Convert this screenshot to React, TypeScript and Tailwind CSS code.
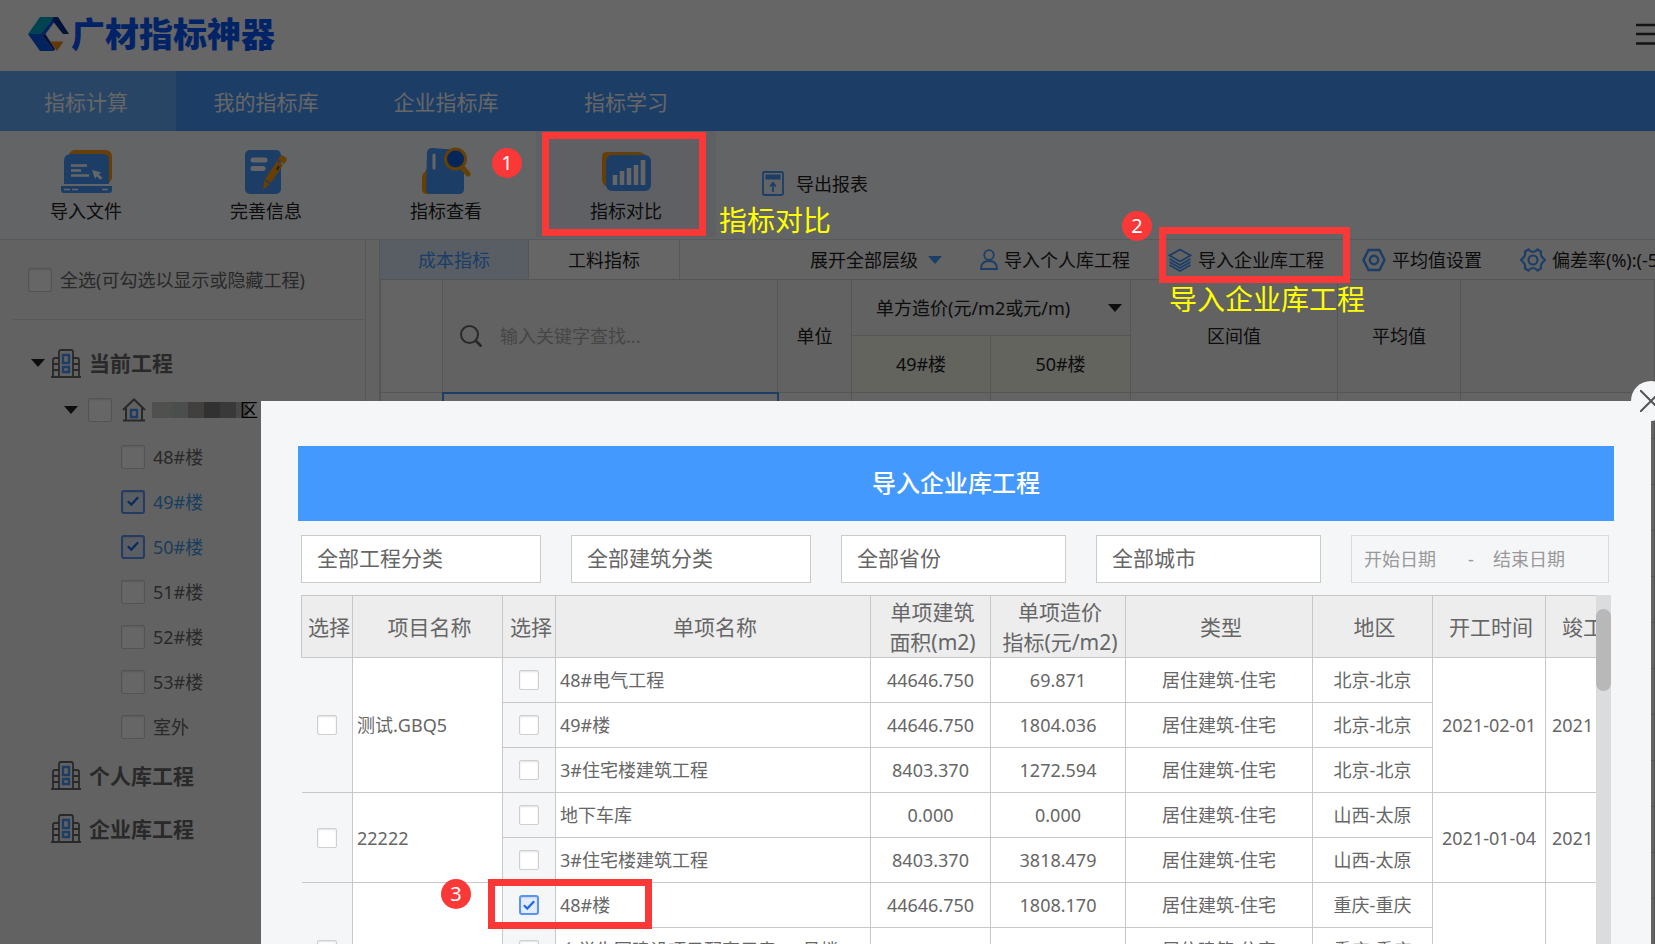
import React from "react";

const FONT = "font-['Noto_Sans','Noto_Sans_CJK_SC',sans-serif]";

function Caret({ className = "" }: { className?: string }) {
  return (
    <svg viewBox="0 0 14 8" className={"h-2 w-3.5 shrink-0 fill-current " + className} aria-hidden="true">
      <path d="M0 0h14L7 8z" />
    </svg>
  );
}

function Check({
  id,
  label,
  checked = false,
  large = false,
}: {
  id: string;
  label: string;
  checked?: boolean;
  large?: boolean;
}) {
  return (
    <span className={"relative inline-grid shrink-0 place-items-center " + (large ? "size-6" : "size-5")}>
      <input
        id={id}
        type="checkbox"
        defaultChecked={checked}
        aria-label={label}
        className="peer col-start-1 row-start-1 size-full appearance-none rounded-[2px] border border-[#cfcfcf] bg-white shadow-[inset_0_1px_2px_rgba(0,0,0,0.12)] checked:rounded-[3px] checked:border-2 checked:border-[#5b93f5] checked:bg-[#e3edfd]"
      />
      <svg
        viewBox="0 0 14 12"
        className="pointer-events-none col-start-1 row-start-1 hidden w-3 fill-none stroke-[#1f66f0] stroke-[2.6] peer-checked:block"
        aria-hidden="true"
      >
        <path d="M1 6.2 5 10 13 1.4" />
      </svg>
    </span>
  );
}

function LogoMark() {
  return (
    <svg viewBox="0 0 41 34" className="h-[34px] w-[41px]" aria-hidden="true">
      <path d="M0 17 12 0h14L13 17z" fill="#00a8c8" />
      <path d="M0 17h13l13 17H12z" fill="#0757e8" />
      <path d="M13 17 15.500 14 27 32l-1 2z" fill="#03308c" />
      <path d="M13 17 26 0h4L16 19z" fill="#0757e8" />
      <path d="M26 0h4l11 17h-6L25.500 5l-2-2z" fill="#03308c" />
      <path d="M22 24.500h13.500L29 34z" fill="#f08a12" />
    </svg>
  );
}

function ImportFileIcon() {
  return (
    <svg viewBox="0 0 52 46" className="h-[46px] w-[52px]" aria-hidden="true">
      <path d="M9 5q2-4 6-4h30q7 0 7 7v20q0 4-4 6L40 10z" fill="#ff9f0f" />
      <path d="M4 35V12q0-7 7-7h32q6 0 6 6v24z" fill="#4499ff" />
      <path d="M1 37h51v4q0 3-3 3H4q-3 0-3-3z" fill="#4499ff" />
      <path d="M11 16.500h16M11 21.500h10M11 26.500h18" stroke="#fff" strokeWidth="2.600" />
      <path d="m32 21 9.500 2.500-3 1.700 4 3.500-2 2-4-3.500L35 30z" fill="#fff" />
      <path d="M4 40.500h6m2 0h6m24 0h6" stroke="#fff" strokeWidth="1.600" />
    </svg>
  );
}

function EditInfoIcon() {
  return (
    <svg viewBox="0 0 44 46" className="h-[46px] w-[44px]" aria-hidden="true">
      <rect x="1" y="1" width="36" height="44" rx="5" fill="#4499ff" />
      <path d="M9 11h12M9 19.500h10" stroke="#fff" strokeWidth="5" strokeLinecap="round" />
      <g fill="#ff9f0f">
        <path d="m36 7 2-1 5 3.500-1 3-2 2.500-6-4z" />
        <path d="m33 12 6 4-12 18-6-4z" />
        <path d="m20 31 6 4-7 6z" />
      </g>
      <path d="m35 17-2 4" stroke="#555" strokeWidth="2" />
    </svg>
  );
}

function ViewIcon() {
  return (
    <svg viewBox="0 0 50 48" className="h-12 w-[50px]" aria-hidden="true">
      <path d="M6 22 2 27q-1 2-1 4v11q0 5 5 5h10z" fill="#ff9f0f" />
      <path d="M6 5q1-4 5-4l27 2q5 1 5 6v33q0 5-5 5H10q-5 0-5-5z" fill="#4499ff" />
      <path d="M13 8v13" stroke="#fff" strokeWidth="3" strokeLinecap="round" />
      <path d="m40 19 7 8" stroke="#ff9f0f" strokeWidth="5" strokeLinecap="round" />
      <circle cx="34.500" cy="12" r="10" fill="#1160e0" stroke="#ff9f0f" strokeWidth="3" />
    </svg>
  );
}

function CompareIcon() {
  return (
    <svg viewBox="0 0 50 44" className="h-11 w-[50px]" aria-hidden="true">
      <path d="M6 1h31q5 0 8 4L8 36q-7-1-7-8V6q0-5 5-5z" fill="#ff9f0f" />
      <rect x="5" y="4" width="45" height="36" rx="6" fill="#4499ff" />
      <path d="M14 34V24m7 10V20m7 14v-17m7 17V14m7 20V9" stroke="#fff" strokeWidth="4.600" />
    </svg>
  );
}

function ExportIcon() {
  return (
    <svg viewBox="0 0 22 26" className="h-[26px] w-[22px] fill-none stroke-[#4499ff]" aria-hidden="true">
      <rect x="1" y="1" width="20" height="23" rx="1.500" strokeWidth="1.800" />
      <path d="M3.500 6h15" strokeWidth="5" />
      <path d="M11 21v-8M8 15.500l3-3.500 3 3.500" strokeWidth="1.800" />
    </svg>
  );
}

function BuildingIcon() {
  return (
    <svg viewBox="0 0 30 29" className="h-[29px] w-[30px] shrink-0 fill-none" aria-hidden="true">
      <g stroke="#666" strokeWidth="1.800">
        <path d="M8 28V3q0-2 2-2h10q2 0 2 2v25M2 28V11q0-2 2-2h4M22 9h4q2 0 2 2v17M0 28h30" />
        <path d="M2 15h6M2 21h6M22 15h6M22 21h6" />
      </g>
      <path d="M12 6h6v8h-6zM12 18h6v5h-6z" stroke="#4499ff" strokeWidth="2.400" />
    </svg>
  );
}

function HomeIcon() {
  return (
    <svg viewBox="0 0 24 24" className="size-6 shrink-0 fill-none" aria-hidden="true">
      <path d="M1 12 12 1.500 23 12M4 10v12M20 10v12M1 22.500h22" stroke="#666" strokeWidth="2" />
      <path d="M9 12h6v7H9z" stroke="#4499ff" strokeWidth="2.400" />
    </svg>
  );
}

function UserIcon() {
  return (
    <svg viewBox="0 0 18 22" className="h-[22px] w-[18px] fill-none stroke-[#4499ff] stroke-[1.800]" aria-hidden="true">
      <circle cx="9" cy="6" r="4.800" />
      <path d="M1 20q0-8 8-8t8 8z" />
    </svg>
  );
}

function LayersIcon() {
  return (
    <svg viewBox="0 0 24 24" className="size-6 fill-none stroke-[#4499ff] stroke-[1.800]" aria-hidden="true">
      <path d="M12 1.500 22.500 7.500 12 13.500 1.500 7.500z" />
      <path d="M1.500 11 12 17l10.500-6M1.500 14 12 20l10.500-6M1.500 17 12 23l10.500-6" />
    </svg>
  );
}

function HexIcon() {
  return (
    <svg viewBox="0 0 24 24" className="size-6 fill-none stroke-[#4499ff] stroke-[2.400]" aria-hidden="true">
      <path d="M6.500 2h11L22.500 12l-5 10h-11L1.500 12z" />
      <circle cx="12" cy="12" r="4.200" />
    </svg>
  );
}

function CogIcon() {
  return (
    <svg viewBox="0 0 26 24" className="h-6 w-[26px] fill-none stroke-[#4499ff] stroke-[2.200]" aria-hidden="true">
      <path d="M8.500 1.500Q10.500 4 13 4t4.500-2.500L21 3.500q-.5 3.500.7 5t3.300 3.500q-2.100 2-3.300 3.500t-.7 5l-3.500 2Q15.500 20 13 20t-4.500 2.500L5 20.500q.5-3.500-.7-5T1 12q2.100-2 3.300-3.500t.7-5z" />
      <circle cx="13" cy="12" r="4.500" />
    </svg>
  );
}

function SearchIcon() {
  return (
    <svg viewBox="0 0 22 22" className="size-[22px] shrink-0 fill-none stroke-[#666] stroke-2" aria-hidden="true">
      <circle cx="9.500" cy="9.500" r="8.500" />
      <path d="m15.500 15.500 6 6" strokeWidth="2.800" />
    </svg>
  );
}

const NAV = ["指标计算", "我的指标库", "企业指标库", "指标学习"];

const TOOLS = [
  { label: "导入文件", icon: <ImportFileIcon /> },
  { label: "完善信息", icon: <EditInfoIcon /> },
  { label: "指标查看", icon: <ViewIcon /> },
  { label: "指标对比", icon: <CompareIcon /> },
];

const BUILDINGS = [
  { name: "48#楼", on: false },
  { name: "49#楼", on: true },
  { name: "50#楼", on: true },
  { name: "51#楼", on: false },
  { name: "52#楼", on: false },
  { name: "53#楼", on: false },
  { name: "室外", on: false },
];

function TopBar() {
  return (
    <header className="shrink-0">
      <div className="flex h-[71px] items-center justify-between overflow-hidden bg-white pb-1 pl-7">
        <div className="flex items-center gap-0.5">
          <LogoMark />
          <span className="text-[34px] leading-9 font-black text-[#0757ff]">广材指标神器</span>
        </div>
        <button type="button" aria-label="菜单" className="-mr-2">
          <svg viewBox="0 0 27 22" className="h-[22px] w-[27px] stroke-[#333] stroke-[2.400]" aria-hidden="true">
            <path d="M0 2h27M0 11h27M0 20.500h27" />
          </svg>
        </button>
      </div>
      <nav className="flex h-[60px] bg-[#4499ff]">
        {NAV.map((item, i) => (
          <a
            key={item}
            href="#"
            className={
              "grid place-items-center pt-0.5 text-[21px] leading-8 text-white " +
              (i === 0 ? "w-[176px] bg-[#64adff] pr-1" : "w-[180px]")
            }
          >
            {item}
          </a>
        ))}
      </nav>
      <div className="flex h-[109px] border-b border-[#dcdfe4] bg-[#f8fafd]">
        {TOOLS.map((tool, i) => (
          <button
            key={tool.label}
            type="button"
            className={
              "flex h-[106px] flex-col items-center justify-end gap-1 pb-3.5 text-lg leading-6 text-[#222] " +
              (i === 0 ? "w-[176px] pr-1" : "w-[180px]") +
              (i === 3 ? " bg-[#eaf0fa]" : "")
            }
          >
            {tool.icon}
            {tool.label}
          </button>
        ))}
        <button type="button" className="ml-[46px] flex items-center gap-3 pb-0.5 text-lg leading-6 text-[#222]">
          <ExportIcon />
          导出报表
        </button>
      </div>
    </header>
  );
}

function Sidebar() {
  return (
    <aside className="flex w-[366px] shrink-0 flex-col border-r border-[#dcdcdc]">
      <div className="ml-[13px] flex h-20 items-center gap-2 border-b border-[#dcdcdc] pl-[15px] text-lg leading-6 text-[#666]">
        <Check id="all" label="全选" large />
        <label htmlFor="all">全选(可勾选以显示或隐藏工程)</label>
      </div>
      <div className="mt-5 flex h-[46px] items-center gap-1.5 pl-[31px]">
        <Caret className="text-[#222]" />
        <BuildingIcon />
        <span className="ml-0.5 text-[21px] leading-7 font-bold text-[#666]">当前工程</span>
      </div>
      <div className="flex h-12 items-center gap-2.5 pl-16">
        <Caret className="text-[#222]" />
        <Check id="site" label="项目" large />
        <HomeIcon />
        <span className="-ml-1 flex items-center">
          <span className="flex h-4" aria-hidden="true">
            <i className="w-5 bg-[#c8c8c2]" />
            <i className="w-4 bg-[#b8c2be]" />
            <i className="w-4 bg-[#a5a19e]" />
            <i className="w-4 bg-[#7c7c7c]" />
            <i className="w-4 bg-[#8e8e8e]" />
            <i className="w-3 bg-[#b4b4b4]" />
          </span>
          <span className="-ml-2 text-lg leading-6 text-black">区</span>
        </span>
      </div>
      <ul>
        {BUILDINGS.map((b, i) => (
          <li key={b.name} className="flex h-[45px] items-center gap-2 pl-[121px]">
            <Check id={"b" + i} label={b.name} checked={b.on} large />
            <label
              htmlFor={"b" + i}
              className={"text-lg leading-6 " + (b.on ? "text-[#3f9ae8]" : "text-[#666]")}
            >
              {b.name}
            </label>
          </li>
        ))}
      </ul>
      {["个人库工程", "企业库工程"].map((name) => (
        <div key={name} className="flex h-[53px] items-center gap-2 pl-[51px]">
          <BuildingIcon />
          <span className="text-[21px] leading-7 font-bold text-[#666]">{name}</span>
        </div>
      ))}
    </aside>
  );
}

function Workspace() {
  const tool = "flex shrink-0 items-center gap-1.5 whitespace-nowrap";
  const cell = "border border-[#d4d4d4]";
  return (
    <main className="ml-[13px] min-w-0 flex-1 overflow-hidden border-l border-[#d4d4d4]">
      <div className="flex h-[39px] items-stretch bg-[#f9f9f9] text-lg leading-6 text-[#222]">
        <button type="button" className="w-[149px] shrink-0 border-r border-[#c8d4e4] bg-[#dceafb] text-[#4499ff]">
          成本指标
        </button>
        <button type="button" className="w-[151px] shrink-0 border-r border-[#dcdcdc] bg-white">
          工料指标
        </button>
        <div className="flex items-center gap-[38px] pl-[130px]">
          <button type="button" className="flex shrink-0 items-center gap-2.5 whitespace-nowrap">
            展开全部层级
            <Caret className="text-[#4499ff]" />
          </button>
          <button type="button" className={tool}>
            <UserIcon />
            导入个人库工程
          </button>
          <button type="button" className={tool}>
            <LayersIcon />
            导入企业库工程
          </button>
          <button type="button" className={tool}>
            <HexIcon />
            平均值设置
          </button>
          <button type="button" className={tool}>
            <CogIcon />
            偏差率(%):(-5,5)
          </button>
        </div>
      </div>
      <table className="w-full table-fixed border-collapse text-lg leading-6 text-[#222]">
        <colgroup>
          <col className="w-[62px]" />
          <col className="w-[335px]" />
          <col className="w-[74px]" />
          <col className="w-[139px]" />
          <col className="w-[140px]" />
          <col className="w-[207px]" />
          <col className="w-[123px]" />
          <col />
        </colgroup>
        <thead className="bg-[#f5f5f5]">
          <tr className="h-14">
            <th rowSpan={2} className={cell + " bg-[#fafafa]"} />
            <th rowSpan={2} className={cell + " font-normal"}>
              <label className="flex items-center gap-[18px] pl-[17px]">
                <SearchIcon />
                <input
                  aria-label="关键字"
                  placeholder="输入关键字查找..."
                  className="w-56 bg-transparent placeholder:text-[#b0b0b0]"
                />
              </label>
            </th>
            <th rowSpan={2} className={cell + " font-normal"}>单位</th>
            <th colSpan={2} className={cell + " font-normal"}>
              <span className="flex items-center justify-between pr-2 pl-6">
                <select aria-label="造价口径" className="appearance-none">
                  <option>单方造价(元/m2或元/m)</option>
                </select>
                <Caret />
              </span>
            </th>
            <th rowSpan={2} className={cell + " font-normal"}>区间值</th>
            <th rowSpan={2} className={cell + " font-normal"}>平均值</th>
            <th rowSpan={2} className={cell} />
          </tr>
          <tr className="h-[57px] bg-[#f9f9ec]">
            <th className={cell + " font-normal"}>49#楼</th>
            <th className={cell + " font-normal"}>50#楼</th>
          </tr>
        </thead>
        <tbody>
          {Array.from({ length: 12 }, (_, r) => (
            <tr key={r} className="h-[46px] bg-[#fafafa]">
              {Array.from({ length: 8 }, (_, c) => (
                <td
                  key={c}
                  className={r === 0 && c === 1 ? "border-2 border-[#4499ff] bg-white" : cell}
                />
              ))}
            </tr>
          ))}
        </tbody>
      </table>
    </main>
  );
}

type Item = { name: string; area: string; cost: string; region: string; checked?: boolean };
type Project = { name: string; start: string; end: string; items: Item[] };

const PROJECTS: Project[] = [
  {
    name: "测试.GBQ5",
    start: "2021-02-01",
    end: "2021",
    items: [
      { name: "48#电气工程", area: "44646.750", cost: "69.871", region: "北京-北京" },
      { name: "49#楼", area: "44646.750", cost: "1804.036", region: "北京-北京" },
      { name: "3#住宅楼建筑工程", area: "8403.370", cost: "1272.594", region: "北京-北京" },
    ],
  },
  {
    name: "22222",
    start: "2021-01-04",
    end: "2021",
    items: [
      { name: "地下车库", area: "0.000", cost: "0.000", region: "山西-太原" },
      { name: "3#住宅楼建筑工程", area: "8403.370", cost: "3818.479", region: "山西-太原" },
    ],
  },
  {
    name: "",
    start: "",
    end: "",
    items: [
      { name: "48#楼", area: "44646.750", cost: "1808.170", region: "重庆-重庆", checked: true },
      { name: "乡学生园建设项目配套用房1-2号楼", area: "", cost: "", region: "重庆-重庆" },
      { name: "", area: "", cost: "", region: "" },
    ],
  },
];

function ImportTable() {
  const line = "border border-[#c8c8c8]";
  const soft = line + " bg-[#f5f6f8] text-center align-middle";
  return (
    <table className="w-[1357px] table-fixed border-collapse text-lg leading-6 text-[#666]">
      <colgroup>
        <col className="w-[51px]" />
        <col className="w-[150px]" />
        <col className="w-[53px]" />
        <col className="w-[315px]" />
        <col className="w-[120px]" />
        <col className="w-[135px]" />
        <col className="w-[187px]" />
        <col className="w-[120px]" />
        <col className="w-[113px]" />
        <col className="w-[113px]" />
      </colgroup>
      <thead>
        <tr className="h-[62px] bg-[#ededed] text-[21px] leading-[30px] whitespace-nowrap [&>th]:border [&>th]:border-[#c8c8c8] [&>th]:font-normal">
          <th className="pl-1">选择</th>
          <th className="pl-1">项目名称</th>
          <th className="pl-1">选择</th>
          <th className="pl-1">单项名称</th>
          <th className="pl-1">单项建筑<br />面积(m2)</th>
          <th className="pl-1">单项造价<br />指标(元/m2)</th>
          <th className="pl-1">类型</th>
          <th className="pl-1">地区</th>
          <th className="pl-1">开工时间</th>
          <th className="pl-1">竣工时间</th>
        </tr>
      </thead>
      <tbody>
        {PROJECTS.map((p, pi) =>
          p.items.map((item, i) => (
            <tr key={pi + "-" + i} className="h-[45px] bg-white text-center whitespace-nowrap">
              {i === 0 && (
                <>
                  <td rowSpan={p.items.length} className={soft + " border-l-0"}>
                    <span className="grid place-items-center">
                      <Check id={"p" + pi} label={"选择项目" + p.name} />
                    </span>
                  </td>
                  <td rowSpan={p.items.length} className={line + " pl-1 text-left"}>{p.name}</td>
                </>
              )}
              <td className={soft}>
                <span className="grid place-items-center">
                  <Check id={"p" + pi + "i" + i} label={"选择" + item.name} checked={item.checked} />
                </span>
              </td>
              <td className={line + " overflow-hidden pl-1 text-left"}>{item.name}</td>
              <td className={line}>{item.area}</td>
              <td className={line}>{item.cost}</td>
              <td className={line}>居住建筑-住宅</td>
              <td className={line}>{item.region}</td>
              {i === 0 && (
                <>
                  <td rowSpan={p.items.length} className={line}>{p.start}</td>
                  <td rowSpan={p.items.length} className={line + " pl-1.5 text-left"}>{p.end}</td>
                </>
              )}
            </tr>
          )),
        )}
      </tbody>
    </table>
  );
}

function ImportDialog() {
  return (
    <section
      role="dialog"
      aria-label="导入企业库工程"
      className="absolute top-[401px] right-1 bottom-0 left-[261px] flex flex-col bg-[#f5f6f8] pt-[45px] pr-[37px] pl-[37px]"
    >
      <button
        type="button"
        aria-label="关闭"
        className="absolute -top-5 -right-5 grid size-10 place-items-center rounded-full bg-[#f5f6f8]"
      >
        <svg viewBox="0 0 22 22" className="size-[22px] stroke-[#555] stroke-2" aria-hidden="true">
          <path d="M0 0 22 22M22 0 0 22" />
        </svg>
      </button>
      <h2 className="grid h-[75px] shrink-0 place-items-center bg-[#4499ff] pb-0.5 text-2xl font-medium text-white">
        导入企业库工程
      </h2>
      <form className="mt-3.5 mr-[5px] ml-[3px] grid h-12 shrink-0 grid-cols-[240fr_240fr_225fr_225fr_258fr] gap-[30px] text-[21px] text-[#666]">
        {["全部工程分类", "全部建筑分类", "全部省份", "全部城市"].map((t) => (
          <select
            key={t}
            aria-label={t}
            className="min-w-0 appearance-none border border-[#ccc] bg-white px-[15px]"
          >
            <option>{t}</option>
          </select>
        ))}
        <div className="flex min-w-0 items-center border border-[#d8dadd] pl-3 text-lg text-[#999]">
          <input aria-label="开始日期" placeholder="开始日期" className="w-[104px] min-w-0 placeholder:text-[#999]" />
          <span className="w-[25px]">-</span>
          <input aria-label="结束日期" placeholder="结束日期" className="w-24 min-w-0 placeholder:text-[#999]" />
        </div>
      </form>
      <div className="mt-3 mr-[3px] ml-[3px] flex min-h-0 flex-1">
        <div className="min-w-0 flex-1 overflow-hidden">
          <ImportTable />
        </div>
        <div className="w-[15px] shrink-0 bg-[#dadcde] pt-3.5">
          <div className="h-[82px] rounded-full bg-[#b8b8b8]" />
        </div>
      </div>
    </section>
  );
}

const RED_BOX = "pointer-events-none absolute border-[7px] border-[#fb3838]";
const BADGE =
  "pointer-events-none absolute grid size-[30px] place-items-center rounded-full bg-[#fb3838] text-xl leading-6 text-white";
const NOTE = "pointer-events-none absolute text-[28px] leading-9 whitespace-nowrap text-[#ffff00]";

export default function App() {
  return (
    <div className={"relative flex h-screen flex-col overflow-hidden bg-[#f5f5f5] " + FONT}>
      <TopBar />
      <div className="flex min-h-0 flex-1">
        <Sidebar />
        <Workspace />
      </div>
      <div className="absolute inset-0 bg-black/60" />
      <ImportDialog />

      <div className={RED_BOX + " top-[132px] left-[542px] h-[104px] w-[164px]"} />
      <span className={BADGE + " top-[148px] left-[492px]"}>1</span>
      <span className={NOTE + " top-[202px] left-[719px]"}>指标对比</span>

      <div className={RED_BOX + " top-[227px] left-[1159px] h-14 w-[191px]"} />
      <span className={BADGE + " top-[211px] left-[1122px]"}>2</span>
      <span className={NOTE + " top-[281px] left-[1169px]"}>导入企业库工程</span>

      <div className={RED_BOX + " top-[879px] left-[488px] h-[50px] w-[164px]"} />
      <span className={BADGE + " top-[879px] left-[441px]"}>3</span>
    </div>
  );
}
